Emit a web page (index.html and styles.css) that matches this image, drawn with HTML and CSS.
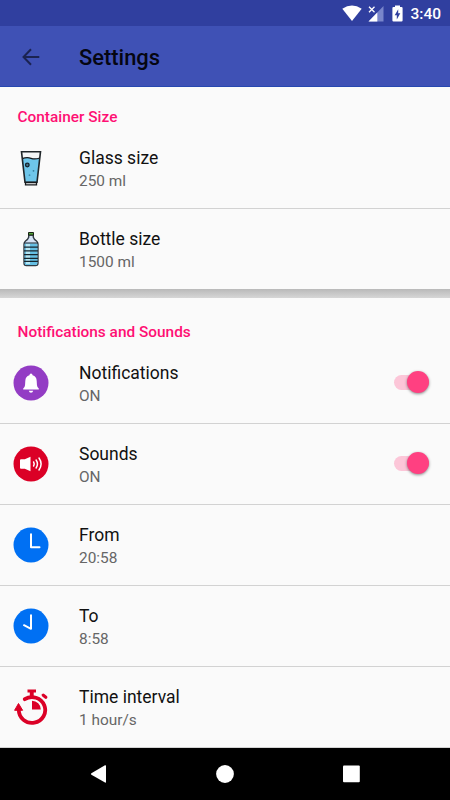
FILE: index.html
```html
<!DOCTYPE html>
<html lang="en">
<head>
<meta charset="UTF-8">
<title>Settings</title>
<link rel="stylesheet" href="styles.css">
</head>
<body>
<div class="screen">
    <div class="status-bar">
        <svg class="wifi" width="20" height="16" viewBox="0 0 20 16"><path fill="#fff" d="M10 16 L0.3 3.8 Q10 -3 19.7 3.8 Z"/></svg>
        <svg class="signal" width="16" height="17" viewBox="0 0 16 17">
            <path fill="#7986cb" d="M15.5 1V16.5H0.5Z"/>
            <path fill="#fff" d="M9.3 7.4V16.5H0.5Z"/>
            <path fill="#303f9f" d="M0 0H8V8H0Z"/>
            <path stroke="#fff" stroke-width="1.3" d="M1 1.8L6.5 7.3M6.5 1.8L1 7.3"/>
        </svg>
        <svg class="battery" width="11" height="17" viewBox="0 0 11 17">
            <path fill="#fff" d="M3 0.5H8V2H9.5Q10.6 2 10.6 3.1V15.4Q10.6 16.5 9.5 16.5H1.5Q0.4 16.5 0.4 15.4V3.1Q0.4 2 1.5 2H3Z"/>
            <path fill="#303f9f" d="M6.2 4.2V8.2H8.3L4.8 14.5V10.2H2.7Z"/>
        </svg>
        <span class="time">3:40</span>
    </div>

    <div class="toolbar">
        <svg class="back" width="18" height="18" viewBox="0 0 18 18"><path fill="none" stroke="#1b2352" stroke-width="2" d="M17.3 9H1.7M9 1.2L1.5 9L9 16.8"/></svg>
        <h1>Settings</h1>
    </div>

    <div class="section containers">
        <h2>Container Size</h2>
        <div class="row">
            <div class="icon">
                <svg width="36" height="36" viewBox="0 0 36 36">
                    <path fill="#f4f6f7" d="M8.5 1.5H27.5L24 34.5H12.5Z"/>
                    <path fill="#6ec6ea" d="M9.3 8.5Q14 7 18 8.2T27 8L24.4 32H12.2Z"/>
                    <path fill="none" stroke="#15191c" stroke-width="1.3" d="M9.2 8.6Q14 7 18 8.3T26.8 8"/>
                    <path fill="none" stroke="#20262a" stroke-width="1.6" d="M8.5 1.7H27.5L24 32.3H12Z"/>
                    <path fill="#fff" stroke="#15191c" stroke-width="1.3" d="M12.5 32.5H23.5V34.8H12.5Z"/>
                    <circle cx="14.3" cy="15" r="1.8" fill="#45778e" stroke="#14212a" stroke-width="1.3"/>
                    <circle cx="20.5" cy="20.8" r="0.9" fill="#347c9c"/>
                    <circle cx="16.5" cy="25.2" r="0.9" fill="#428ead"/>
                </svg>
            </div>
            <div class="text">
                <p class="name">Glass size</p>
                <p class="value">250 ml</p>
            </div>
        </div>
        <div class="row">
            <div class="icon">
                <svg width="36" height="36" viewBox="0 0 36 36">
                    <path fill="#d6e3f6" stroke="#303a42" stroke-width="1.4" d="M15.7 4V6.2Q15.2 8 12.5 10Q11 11.3 11 13V32Q11 34.6 13.4 34.6H22.6Q25 34.6 25 32V13Q25 11.3 23.5 10Q20.8 8 20.3 6.2V4Z"/>
                    <path fill="#65bfe4" d="M11.7 12.5H24.3V32.5Q24.3 34 22.5 34H13.5Q11.7 34 11.7 32.5Z"/>
                    <path fill="#b6e7f4" d="M13 13H17V33H13Z"/>
                    <path stroke="#16252e" stroke-width="1.2" d="M11 12H25M11 16.2H25M11 19.9H25M11 23.6H25M11 27.3H25M11 30.3H25"/>
                    <path fill="#55a53a" stroke="#182014" stroke-width="1" d="M15.5 1.5H20.5V4H15.5Z"/>
                </svg>
            </div>
            <div class="text">
                <p class="name">Bottle size</p>
                <p class="value">1500 ml</p>
            </div>
        </div>
    </div>

    <div class="separator"></div>

    <div class="section alerts">
        <h2>Notifications and Sounds</h2>
        <div class="row">
            <div class="icon">
                <svg width="36" height="36" viewBox="0 0 36 36">
                    <circle cx="18" cy="18" r="17.5" fill="#933cc4"/>
                    <path fill="#fff" d="M18 8.4Q19.4 8.4 19.6 10.3Q23.5 11.4 23.7 16Q23.8 20.5 24.4 21.7Q24.7 22.5 25.8 23.5V24.4H10.2V23.5Q11.3 22.5 11.6 21.7Q12.2 20.5 12.3 16Q12.5 11.4 16.4 10.3Q16.6 8.4 18 8.4ZM15.8 25.7H20.2Q19.8 27.8 18 27.8T15.8 25.7Z"/>
                </svg>
            </div>
            <div class="text">
                <p class="name">Notifications</p>
                <p class="value">ON</p>
            </div>
            <div class="switch"><span class="thumb"></span></div>
        </div>
        <div class="row">
            <div class="icon">
                <svg width="36" height="36" viewBox="0 0 36 36">
                    <circle cx="18" cy="18" r="17.5" fill="#db0026"/>
                    <path fill="#fff" d="M7 14.2Q7 13.2 8 13.2H11.8L17.5 10.7V25.2L11.8 22.7H8Q7 22.7 7 21.7Z"/>
                    <path fill="none" stroke="#fff" stroke-width="1.5" stroke-linecap="round" d="M20.6 16Q21.8 18 20.6 20M23.1 14Q25.8 18 23.1 22M26 12Q30.2 18 26 24"/>
                </svg>
            </div>
            <div class="text">
                <p class="name">Sounds</p>
                <p class="value">ON</p>
            </div>
            <div class="switch"><span class="thumb"></span></div>
        </div>
        <div class="row">
            <div class="icon">
                <svg width="36" height="36" viewBox="0 0 36 36">
                    <circle cx="18" cy="18" r="17.5" fill="#0070f3"/>
                    <path fill="none" stroke="#fff" stroke-width="2" stroke-linecap="round" stroke-linejoin="round" d="M18 7.3V20.3H26.5"/>
                </svg>
            </div>
            <div class="text">
                <p class="name">From</p>
                <p class="value">20:58</p>
            </div>
        </div>
        <div class="row">
            <div class="icon">
                <svg width="36" height="36" viewBox="0 0 36 36">
                    <circle cx="18" cy="18" r="17.5" fill="#0070f3"/>
                    <path fill="none" stroke="#fff" stroke-width="2" stroke-linecap="round" stroke-linejoin="round" d="M18 7.3V20.8L11 17.2"/>
                </svg>
            </div>
            <div class="text">
                <p class="name">To</p>
                <p class="value">8:58</p>
            </div>
        </div>
        <div class="row">
            <div class="icon">
                <svg width="36" height="36" viewBox="0 0 36 36">
                    <path fill="none" stroke="#db0026" stroke-width="3.8" stroke-linecap="round" d="M11.8 10.2A13.2 12.9 0 1 1 5.8 20.8"/>
                    <path fill="#db0026" stroke="#db0026" stroke-linejoin="round" d="M1.6 21.3L5.5 14.5L9.6 21.3Z"/>
                    <path fill="#db0026" d="M14.5 0.5H23V3.5H20.7V7H16.8V3.5H14.5ZM19 11.7A8.8 8.8 0 0 1 27.8 20.5H19Z"/>
                    <path stroke="#db0026" stroke-width="3.2" stroke-linecap="round" d="M30.3 6.3L32.8 8.3"/>
                </svg>
            </div>
            <div class="text">
                <p class="name">Time interval</p>
                <p class="value">1 hour/s</p>
            </div>
        </div>
    </div>

    <div class="nav-bar">
        <svg width="18" height="18" viewBox="0 0 18 18"><path fill="#fff" d="M1.4 8.2L15 0.3Q16 0 16 1V17Q16 18 15 17.6L1.4 9.8Q0.4 9 1.4 8.2Z"/></svg>
        <svg width="18" height="18" viewBox="0 0 18 18"><circle cx="9" cy="9" r="8.9" fill="#fff"/></svg>
        <svg width="18" height="18" viewBox="0 0 18 18"><rect x="1" y="0.6" width="16.8" height="16.6" rx="1" fill="#fff"/></svg>
    </div>
</div>
</body>
</html>
```
FILE: styles.css
```css
* {
    box-sizing: border-box;
}
body {
    margin: 0;
    font-family: Roboto, sans-serif;
}
h1, h2, p {
    margin: 0;
}
svg {
    display: block;
}
.screen {
    width: 450px;
    height: 800px;
    display: flex;
    flex-direction: column;
    overflow: hidden;
    background: #fafafa;
}
.status-bar {
    height: 26px;
    flex: none;
    display: flex;
    align-items: center;
    justify-content: flex-end;
    padding-right: 9px;
    background: #303f9f;
    color: #fff;
}
.signal {
    margin-left: 6px;
}
.battery {
    margin: 0 7px 0 8px;
}
.time {
    font-size: 15.5px;
    font-weight: 500;
    line-height: 26px;
    padding-top: 2px;
}
.toolbar {
    height: 61px;
    flex: none;
    display: flex;
    align-items: center;
    padding: 2px 0 0 22px;
    background: #3f51b5;
    border-bottom: 1px solid #2748b0;
}
.toolbar h1 {
    margin-left: 39px;
    font-size: 21.9px;
    font-weight: 500;
    color: #050611;
}
.section {
    flex: none;
}
.section h2 {
    padding-left: 17.5px;
    font-size: 15.4px;
    font-weight: 500;
    line-height: 20px;
    color: #ff0f73;
}
.containers {
    height: 202px;
}
.containers h2 {
    height: 40.5px;
    padding-top: 20px;
}
.alerts h2 {
    height: 44.5px;
    padding-top: 23.5px;
}
.row {
    height: 81.25px;
    display: flex;
    align-items: center;
    padding: 0 20px 0 13px;
    border-bottom: 1px solid #d2d2d2;
}
.alerts .row {
    height: 81.1px;
}
.containers .row:last-child {
    border-bottom: none;
}
.icon {
    width: 66px;
    flex: none;
}
.text {
    flex: 1;
    padding-top: 3px;
}
.name {
    font-size: 17.5px;
    line-height: 23px;
    color: #111;
}
.value {
    font-size: 15.4px;
    line-height: 22px;
    color: #666;
}
.switch {
    position: relative;
    width: 35px;
    height: 15px;
    margin-right: 1px;
    border-radius: 8px;
    background: #fcc6d8;
}
.thumb {
    position: absolute;
    right: 0;
    top: -4px;
    width: 22px;
    height: 22px;
    border-radius: 50%;
    background: #ff4081;
    box-shadow: 0 1px 3px rgba(0,0,0,0.45);
}
.separator {
    height: 9px;
    flex: none;
    background: linear-gradient(#b9b9b9, #d6d6d6);
}
.nav-bar {
    height: 52px;
    flex: none;
    margin-top: auto;
    display: flex;
    align-items: center;
    justify-content: space-between;
    padding: 0 90px;
    background: #000;
}
```
